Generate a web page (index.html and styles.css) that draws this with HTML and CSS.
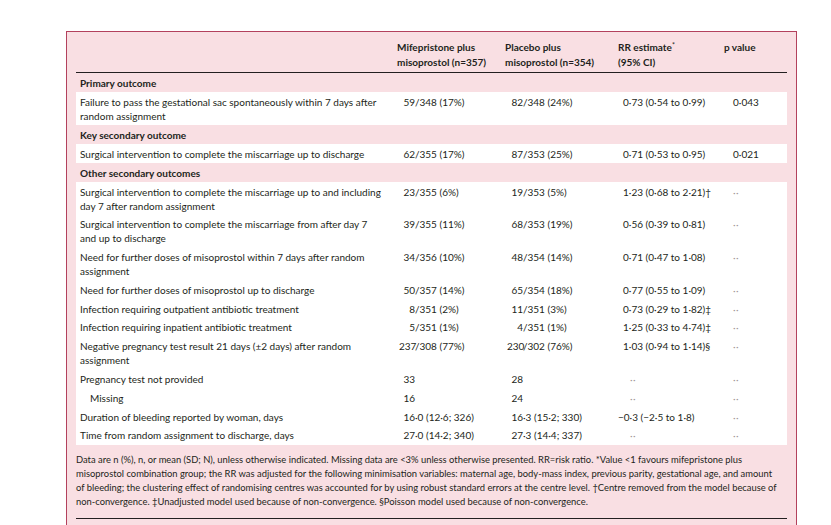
FILE: index.html
```html
<!DOCTYPE html>
<html lang="en">
<head>
<meta charset="utf-8">
<title>Table 2: Primary and secondary outcomes</title>
<link rel="stylesheet" href="styles.css">
</head>
<body>
<div class="panel">
  <table class="outcomes">
    <colgroup>
      <col class="c-label">
      <col class="c-mife">
      <col class="c-plac">
      <col class="c-rr">
      <col class="c-p">
    </colgroup>
    <thead>
      <tr>
        <th></th>
        <th>Mifepristone plus<br>misoprostol (n=357)</th>
        <th>Placebo plus<br>misoprostol (n=354)</th>
        <th>RR estimate<sup>*</sup><br>(95% CI)</th>
        <th>p value</th>
      </tr>
    </thead>
    <tbody>
      <tr class="group"><th colspan="5">Primary outcome</th></tr>
      <tr>
        <td>Failure to pass the gestational sac spontaneously within 7 days after<br>random assignment</td>
        <td class="num"><span class="n">59</span>/348 (17%)</td>
        <td class="num"><span class="n">82</span>/348 (24%)</td>
        <td class="rr">0·73 (0·54 to 0·99)</td>
        <td class="pv">0·043</td>
      </tr>
      <tr class="group"><th colspan="5">Key secondary outcome</th></tr>
      <tr>
        <td>Surgical intervention to complete the miscarriage up to discharge</td>
        <td class="num"><span class="n">62</span>/355 (17%)</td>
        <td class="num"><span class="n">87</span>/353 (25%)</td>
        <td class="rr">0·71 (0·53 to 0·95)</td>
        <td class="pv">0·021</td>
      </tr>
      <tr class="group"><th colspan="5">Other secondary outcomes</th></tr>
      <tr>
        <td>Surgical intervention to complete the miscarriage up to and including<br>day 7 after random assignment</td>
        <td class="num"><span class="n">23</span>/355 (6%)</td>
        <td class="num"><span class="n">19</span>/353 (5%)</td>
        <td class="rr">1·23 (0·68 to 2·21)†</td>
        <td class="pv"><span class="nil">··</span></td>
      </tr>
      <tr>
        <td>Surgical intervention to complete the miscarriage from after day 7<br>and up to discharge</td>
        <td class="num"><span class="n">39</span>/355 (11%)</td>
        <td class="num"><span class="n">68</span>/353 (19%)</td>
        <td class="rr">0·56 (0·39 to 0·81)</td>
        <td class="pv"><span class="nil">··</span></td>
      </tr>
      <tr>
        <td>Need for further doses of misoprostol within 7 days after random<br>assignment</td>
        <td class="num"><span class="n">34</span>/356 (10%)</td>
        <td class="num"><span class="n">48</span>/354 (14%)</td>
        <td class="rr">0·71 (0·47 to 1·08)</td>
        <td class="pv"><span class="nil">··</span></td>
      </tr>
      <tr>
        <td>Need for further doses of misoprostol up to discharge</td>
        <td class="num"><span class="n">50</span>/357 (14%)</td>
        <td class="num"><span class="n">65</span>/354 (18%)</td>
        <td class="rr">0·77 (0·55 to 1·09)</td>
        <td class="pv"><span class="nil">··</span></td>
      </tr>
      <tr>
        <td>Infection requiring outpatient antibiotic treatment</td>
        <td class="num"><span class="n">8</span>/351 (2%)</td>
        <td class="num"><span class="n">11</span>/351 (3%)</td>
        <td class="rr">0·73 (0·29 to 1·82)‡</td>
        <td class="pv"><span class="nil">··</span></td>
      </tr>
      <tr>
        <td>Infection requiring inpatient antibiotic treatment</td>
        <td class="num"><span class="n">5</span>/351 (1%)</td>
        <td class="num"><span class="n">4</span>/351 (1%)</td>
        <td class="rr">1·25 (0·33 to 4·74)‡</td>
        <td class="pv"><span class="nil">··</span></td>
      </tr>
      <tr>
        <td>Negative pregnancy test result 21 days (±2 days) after random<br>assignment</td>
        <td class="num"><span class="n">237</span>/308 (77%)</td>
        <td class="num"><span class="n">230</span>/302 (76%)</td>
        <td class="rr">1·03 (0·94 to 1·14)§</td>
        <td class="pv"><span class="nil">··</span></td>
      </tr>
      <tr>
        <td>Pregnancy test not provided</td>
        <td class="num"><span class="n">33</span></td>
        <td class="num"><span class="n">28</span></td>
        <td class="rr"><span class="nil rr-nil">··</span></td>
        <td class="pv"><span class="nil">··</span></td>
      </tr>
      <tr>
        <td class="sub">Missing</td>
        <td class="num"><span class="n">16</span></td>
        <td class="num"><span class="n">24</span></td>
        <td class="rr"><span class="nil rr-nil">··</span></td>
        <td class="pv"><span class="nil">··</span></td>
      </tr>
      <tr>
        <td>Duration of bleeding reported by woman, days</td>
        <td class="num"><span class="n">16</span>·0 (12·6; 326)</td>
        <td class="num"><span class="n">16</span>·3 (15·2; 330)</td>
        <td class="rr hang">−0·3 (−2·5 to 1·8)</td>
        <td class="pv"><span class="nil">··</span></td>
      </tr>
      <tr>
        <td>Time from random assignment to discharge, days</td>
        <td class="num"><span class="n">27</span>·0 (14·2; 340)</td>
        <td class="num"><span class="n">27</span>·3 (14·4; 337)</td>
        <td class="rr"><span class="nil rr-nil">··</span></td>
        <td class="pv"><span class="nil">··</span></td>
      </tr>
    </tbody>
  </table>
  <p class="notes">Data are n (%), n, or mean (SD; N), unless otherwise indicated. Missing data are &lt;3% unless otherwise presented. RR=risk ratio. *Value &lt;1 favours mifepristone plus<br>misoprostol combination group; the RR was adjusted for the following minimisation variables: maternal age, body-mass index, previous parity, gestational age, and amount<br>of bleeding; the clustering effect of randomising centres was accounted for by using robust standard errors at the centre level. †Centre removed from the model because of<br>non-convergence. ‡Unadjusted model used because of non-convergence. §Poisson model used because of non-convergence.</p>
  <p class="caption"><b>Table 2:</b> Primary and secondary outcomes</p>
</div>
</body>
</html>
```

FILE: styles.css
```css
html, body {
  margin: 0;
  padding: 0;
  background: #ffffff;
  overflow: hidden;
}

body {
  font-family: Lato, "Open Sans", sans-serif;
  font-size: 10px;
  color: #231f20;
}

.panel {
  margin: 31px 0 0 66px;
  width: 711px;
  padding: 4px 9px 40px;
  border: 1px solid #b3415d;
  background: #f9dfe3;
}

.outcomes {
  width: 711px;
  table-layout: fixed;
  border-collapse: collapse;
  border-spacing: 0;
}

.c-label { width: 317px; }
.c-mife { width: 108px; }
.c-plac { width: 113px; }
.c-rr { width: 106px; }
.c-p { width: 67px; }

.outcomes thead th {
  text-align: left;
  font-weight: 700;
  line-height: 15px;
  padding: 3.5px 4px 2.5px;
  vertical-align: top;
  border-bottom: 1px solid #231f20;
}

.outcomes sup {
  font-size: 7px;
  line-height: 0;
  vertical-align: 3px;
  font-weight: 400;
}

.outcomes tbody td,
.outcomes tbody th {
  line-height: 14px;
  padding: 2.4px 4px;
  vertical-align: top;
  text-align: left;
  white-space: nowrap;
}

.outcomes tbody tr {
  background: #ffffff;
}

.outcomes tbody tr.group {
  background: transparent;
}

.outcomes tbody tr.group th {
  font-weight: 700;
  padding-top: 3px;
  padding-bottom: 2.2px;
}

.outcomes td.sub {
  padding-left: 14px;
}

.outcomes td.num {
  padding-left: 6px;
}

.n {
  display: inline-block;
  width: 16px;
  text-align: right;
}

.outcomes td.rr {
  padding-left: 9px;
}

.outcomes td.rr.hang {
  padding-left: 4px;
}

.outcomes td.pv {
  padding-left: 13px;
}

.nil {
  color: #a39a9c;
  letter-spacing: 0.5px;
}

.rr-nil {
  margin-left: 7px;
}

.notes {
  margin: 0;
  padding: 8.5px 0 8.5px;
  font-size: 9.4px;
  line-height: 14px;
  white-space: nowrap;
  border-bottom: 1px solid #231f20;
}

.caption {
  margin: 3px 0 0;
  line-height: 14px;
}
```
